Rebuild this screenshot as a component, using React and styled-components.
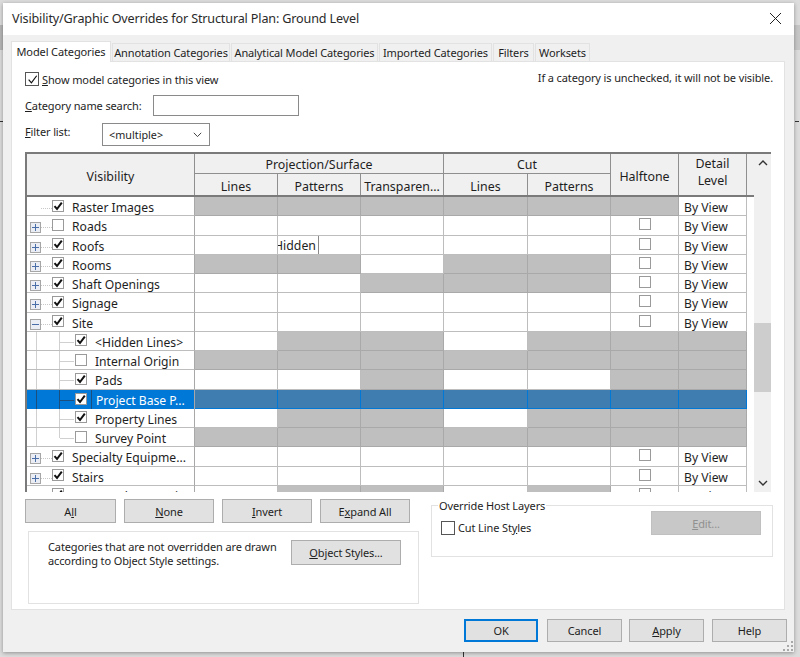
import React from "react";
import styled, { createGlobalStyle, css } from "styled-components";

const Global = createGlobalStyle`
  html, body { margin: 0; padding: 0; background: #dcdcdc; }
  * { box-sizing: border-box; }
`;

const FONT = `"Noto Sans", "Open Sans", sans-serif`;
const GREY = "#bfbfbf";
const SEL = "#3f7cb0";
const small = css`font-size: 11px; letter-spacing: -0.12px;`;

const Stage = styled.div`
  width: 800px; height: 657px; overflow: hidden;
  padding: 3px 6px 5px 3px;
  background-color: #dcdcdc;
  background-image:
    linear-gradient(#b6b6b6, #b6b6b6), linear-gradient(#c6c6c6, #c6c6c6),
    linear-gradient(#333, #333), linear-gradient(#333, #333), linear-gradient(#333, #333);
  background-repeat: no-repeat;
  background-size: 3px 25px, 6px 25px, 3px 1px, 4px 1px, 1px 5px;
  background-position: 0 25px, 794px 25px, 0 121px, 795px 121px, 463px 652px;
  font: 12.15px/16px ${FONT};
  color: #1e1e1e;
`;
const Dialog = styled.div`
  height: 100%;
  display: flex; flex-direction: column;
  background: #f0f0f0;
  box-shadow: 0 1px 4px rgba(0,0,0,.35);
`;
const TitleBar = styled.div`
  height: 32px; flex: none;
  background: #fff;
  display: flex; align-items: center; justify-content: space-between;
  padding: 0 12px 0 9px;
  font-size: 12.6px;
  letter-spacing: -0.15px;
  color: #2a2a2a;
`;
const CloseButton = styled.span`
  display: flex; width: 13px; height: 13px; margin-top: -1px;
`;
const Body = styled.div`
  flex: 1; min-height: 0;
  display: flex; flex-direction: column;
  padding: 7px 9px 0 8px;
`;
const TabStrip = styled.div`
  display: flex; align-items: flex-end; height: 20px; flex: none;
  position: relative; z-index: 1; margin-bottom: -1px;
`;
const Tab = styled.div`
  height: ${p => (p.$active ? "21px" : "19px")};
  width: ${p => p.$w}px;
  flex: none;
  margin-right: 1px;
  padding-top: ${p => (p.$active ? "0" : "1px")};
  display: flex; align-items: center; justify-content: center;
  background: ${p => (p.$active ? "#fff" : "#f0f0f0")};
  border: 1px solid #e2e2e2;
  border-bottom: ${p => (p.$active ? "0" : "1px solid #e2e2e2")};
  ${small}
  white-space: nowrap;
`;
const Panel = styled.div`
  width: 774px; height: 549px; flex: none;
  background: #fff;
  border: 1px solid #e2e2e2;
  padding: 10px 11px 0 13px;
  display: flex; flex-direction: column;
`;
const TopRow = styled.div`
  display: flex; justify-content: space-between; height: 14px; align-items: center;
`;
const CheckLabel = styled.label`
  display: flex; align-items: center; gap: 3px;
  margin-top: ${p => p.$mt || 0}px;
`;
const LabelText = styled.span`
  ${small}
  margin-top: 1px;
`;
const BigBox = styled.span`
  width: 14px; height: 14px; flex: none;
  background: #fff; border: 1px solid #555;
  display: flex; align-items: center; justify-content: center;
`;
const Hint = styled.span`
  ${small} margin-top: -2px;
`;
const FormRow = styled.div`
  display: flex; align-items: center; height: ${p => p.$h}px; margin-top: ${p => p.$mt}px;
`;
const FormLabel = styled.span`
  width: ${p => p.$w}px; flex: none;
  ${small}
  margin-top: ${p => p.$up || 0}px;
`;
const TextInput = styled.div`
  width: 146px; height: 21px;
  background: #fff; border: 1px solid #8a8a8a;
`;
const Select = styled.div`
  width: 108px; height: 23px;
  border: 1px solid #8a8a8a; background: #fff;
  display: flex; align-items: center; justify-content: space-between;
  padding: 0 7px 0 6px;
  font-size: 10.8px;
`;
const GridWrap = styled.div`
  margin-top: 6px; width: 746px; height: 340px; flex: none;
  display: flex; overflow: hidden;
  border-top: 2px solid #7a7a7a;
`;
const GridMain = styled.div`
  width: 729px; flex: none; overflow: hidden;
  background: #fff;
  border-left: 2px solid #7a7a7a;
`;
const Columns = "168px 83px 83px 83px 84px 83px 68px 68px";
const Head = styled.div`
  display: grid;
  grid-template-columns: ${Columns};
  grid-template-rows: 20px 21px;
  height: 43px;
  width: 727px;
  background: #f0f0f0;
  border-bottom: 2px solid #7a7a7a;
`;
const HeadCell = styled.div`
  grid-column: ${p => p.$col};
  grid-row: ${p => p.$row};
  display: flex; align-items: center; justify-content: center; text-align: center;
  border-right: 1px solid #8f8f8f;
  border-bottom: ${p => (p.$line ? "1px solid #8f8f8f" : "0")};
  padding: ${p => p.$pad || "0"};
  font-size: 12.4px; line-height: 17px;
`;
const Row = styled.div`
  display: grid;
  grid-template-columns: ${Columns};
  height: 19.25px;
`;
const TreeCell = styled.div`
  display: flex; align-items: center; min-width: 0;
  background: ${p => (p.$sel ? "#0078d7" : "#fff")};
  border-right: 1px solid #a8a8a8;
  border-bottom: ${p => (p.$sel ? "0" : "1px solid #bdbdbd")};
  overflow: hidden;
`;
const Gutter = styled.div`
  height: 100%; width: ${p => p.$w}px; flex: none;
  display: flex; align-items: center;
  background-repeat: no-repeat;
`;
const TopGutter = styled(Gutter)`
  padding: 5px 0 0 3px;
  background-image: repeating-linear-gradient(90deg, #c8c8c8 0 1px, transparent 1px 2px);
  background-size: 11px 1px;
  background-position: 14px 11px;
`;
const ChildGutter = styled(Gutter)`
  background-image:
    linear-gradient(${p => (p.$sel ? "#1c4f7d, #1c4f7d" : "#d0d0d0, #d0d0d0")}),
    linear-gradient(${p => (p.$sel ? "#1c4f7d, #1c4f7d" : "#d0d0d0, #d0d0d0")}),
    linear-gradient(${p => (p.$sel ? "#1c4f7d, #1c4f7d" : "#d0d0d0, #d0d0d0")});
  background-size: 1px 100%, 1px ${p => (p.$last ? "10px" : "100%")}, 14px 1px;
  background-position: 9px 0, 32px 0, 33px 10px;
`;
const ExpanderIcon = styled.svg`
  flex: none;
`;
const Box = styled.span`
  width: 12px; height: 12px; flex: none;
  margin-top: -1px;
  background: #fff; border: 1px solid #9a9a9a;
  display: flex; align-items: center; justify-content: center;
`;
const Name = styled.span`
  margin-left: ${p => (p.$sel ? "4px" : "8px")};
  padding: 4px 0 0 ${p => (p.$sel ? "4px" : "0")};
  white-space: nowrap;
  flex: ${p => (p.$sel ? "1" : "none")};
  height: 100%;
  display: flex; align-items: center;
  color: ${p => (p.$sel ? "#fff" : "#1e1e1e")};
  border-left: ${p => (p.$sel ? "1px solid #1c4f7d" : "0")};
`;
const DataCell = styled.div`
  min-width: 0;
  display: flex; align-items: center;
  justify-content: ${p => (p.$center ? "center" : "flex-start")};
  padding: ${p => (p.$text ? "4px 0 0 5px" : "0")};
  background: ${p => (p.$sel ? SEL : p.$grey ? GREY : "#fff")};
  border-right: 1px solid ${p => (p.$sel ? "#0078d7" : p.$grey ? "#a9a9a9" : "#bdbdbd")};
  border-bottom: 1px solid ${p => (p.$sel ? "#0078d7" : p.$grey ? "#a9a9a9" : "#bdbdbd")};
  white-space: nowrap; overflow: hidden;
`;
const EditorText = styled.span`
  display: flex; align-items: center; height: 100%;
  width: 45px; flex: none;
  margin-left: -4px;
  padding-top: 3px;
  font-size: 12.3px;
  border-right: 1px solid #888;
`;
const HalfBox = styled.span`
  width: 12px; height: 12px; margin-top: -2px;
  background: #fff; border: 1px solid #9a9a9a;
`;
const Scrollbar = styled.div`
  width: 17px; flex: none;
  display: flex; flex-direction: column; align-items: center;
  background: #f0f0f0;
`;
const ArrowBox = styled.div`
  height: 18px; flex: none; width: 100%;
  display: flex; align-items: center; justify-content: center;
`;
const Track = styled.div`
  flex: 1; width: 100%;
  padding-top: ${p => p.$top}px;
`;
const Thumb = styled.div`
  height: 69px; background: #cdcdcd;
`;
const LowerRow = styled.div`
  display: flex; margin-top: 7px; align-items: flex-start;
`;
const LeftColumn = styled.div`
  width: 394px; flex: none;
  display: flex; flex-direction: column;
`;
const ButtonRow = styled.div`
  display: flex; gap: 8px;
`;
const Btn = styled.div`
  width: ${p => p.$w}px; height: ${p => p.$h || 24}px; flex: none;
  display: flex; align-items: center; justify-content: center;
  padding-top: 1px;
  background: ${p => (p.$disabled ? "#c8c8c8" : "#e1e1e1")};
  color: ${p => (p.$disabled ? "#909090" : "#1e1e1e")};
  border: ${p => (p.$primary ? "1px solid #0078d7" : p.$disabled ? "1px solid #c0c0c0" : "1px solid #adadad")};
  box-shadow: ${p => (p.$primary ? "inset 0 0 0 1px #0078d7" : "none")};
  ${small}
  margin-right: ${p => p.$mr || 0}px;
`;
const U = styled.span`text-decoration: underline; text-underline-offset: 1px;`;
const NoteBox = styled.div`
  width: 391px; height: 73px; margin: 8px 0 0 3px; flex: none;
  border: 1px solid #e2e2e2;
  padding: 8px 17px 0 19px;
  display: flex; justify-content: space-between; align-items: flex-start;
`;
const NoteText = styled.div`
  ${small}
  line-height: 14px; white-space: nowrap;
`;
const Group = styled.fieldset`
  width: 343px; height: 59px; margin: -1px 0 0 12px; padding: 0 11px 0 9px;
  border: 1px solid #e2e2e2;
  display: flex; justify-content: space-between; align-items: flex-start;
  min-inline-size: 0;
`;
const GroupLegend = styled.legend`
  padding: 1px 1px 0; margin-left: -3px; line-height: 14px;
  ${small}
`;
const EditSlot = styled.div`
  margin-top: -2px;
`;
const Footer = styled.div`
  flex: 1; display: flex; justify-content: flex-end; align-items: flex-start;
  padding: 9px 0 0 0; margin-right: -2px; position: relative;
`;
const Grip = styled.svg`
  position: absolute; right: -6px; bottom: 1px;
`;

const Check = ({ size = 10, w = 2, color = "#111" }) => (
  <svg width={size} height={size} viewBox="0 0 10 10">
    <path d="M1.5 5.2 L4 8 L8.8 1.6" fill="none" stroke={color} strokeWidth={w} />
  </svg>
);

const Expander = ({ open }) => (
  <ExpanderIcon width="11" height="11" viewBox="0 0 11 11">
    <rect x=".5" y=".5" width="10" height="10" fill="#eaeef4" stroke="#a6a6a6" />
    <path d={open ? "M2 5.5H9" : "M2 5.5H9M5.5 2V9"} stroke="#4a6fa8" strokeWidth="1" />
  </ExpanderIcon>
);

const COLS = 7;
const rows = [
  { n: "Raster Images", leaf: true, c: true, g: "111111" },
  { n: "Roads", c: false, g: "000000", half: true },
  { n: "Roofs", c: true, g: "000000", half: true, edit: true },
  { n: "Rooms", c: true, g: "110110", half: true },
  { n: "Shaft Openings", c: true, g: "001110", half: true },
  { n: "Signage", c: true, g: "000000", half: true },
  { n: "Site", c: true, g: "000000", half: true, open: true },
  { n: "<Hidden Lines>", child: true, c: true, g: "0110111" },
  { n: "Internal Origin", child: true, c: false, g: "1111111" },
  { n: "Pads", child: true, c: true, g: "0010011" },
  { n: "Project Base P...", child: true, c: true, g: "1111111", sel: true },
  { n: "Property Lines", child: true, c: true, g: "0110111" },
  { n: "Survey Point", child: true, c: false, g: "1111111", last: true },
  { n: "Specialty Equipme...", c: true, g: "000000", half: true },
  { n: "Stairs", c: true, g: "000000", half: true },
  { n: "Structural Area Rein...", c: true, g: "011010", half: true },
];

function GridRow({ r }) {
  const flags = r.g.padEnd(COLS, "0");
  return (
    <Row>
      <TreeCell $sel={r.sel}>
        {r.child ? (
          <ChildGutter $w={48} $sel={r.sel} $last={r.last} />
        ) : (
          <TopGutter $w={25}>{r.leaf ? null : <Expander open={r.open} />}</TopGutter>
        )}
        <Box>{r.c && <Check />}</Box>
        <Name $sel={r.sel}>{r.n}</Name>
      </TreeCell>
      {[0, 1, 2, 3, 4].map(i => (
        <DataCell key={i} $grey={flags[i] === "1"} $sel={r.sel}>
          {r.edit && i === 1 && <EditorText>Hidden</EditorText>}
        </DataCell>
      ))}
      <DataCell $grey={flags[5] === "1"} $sel={r.sel} $center>
        {r.half && <HalfBox />}
      </DataCell>
      <DataCell $grey={flags[6] === "1"} $sel={r.sel} $text>
        {flags[6] === "1" ? null : "By View"}
      </DataCell>
    </Row>
  );
}

export default function App() {
  return (
    <Stage>
      <Global />
      <Dialog>
        <TitleBar>
          <span>Visibility/Graphic Overrides for Structural Plan: Ground Level</span>
          <CloseButton>
            <svg width="13" height="13" viewBox="0 0 13 13">
              <path d="M1 1L12 12M12 1L1 12" stroke="#222" strokeWidth="1" />
            </svg>
          </CloseButton>
        </TitleBar>
        <Body>
          <TabStrip>
            <Tab $active $w={100}>Model Categories</Tab>
            <Tab $w={118}>Annotation Categories</Tab>
            <Tab $w={147}>Analytical Model Categories</Tab>
            <Tab $w={113}>Imported Categories</Tab>
            <Tab $w={41}>Filters</Tab>
            <Tab $w={55}>Worksets</Tab>
          </TabStrip>
          <Panel>
            <TopRow>
              <CheckLabel>
                <BigBox><Check size={11} w={1.1} /></BigBox>
                <LabelText><U>S</U>how model categories in this view</LabelText>
              </CheckLabel>
              <Hint>If a category is unchecked, it will not be visible.</Hint>
            </TopRow>
            <FormRow $h={21} $mt={9}>
              <FormLabel $w={128}><U>C</U>ategory name search:</FormLabel>
              <TextInput />
            </FormRow>
            <FormRow $h={23} $mt={7}>
              <FormLabel $w={77} $up={-5}><U>F</U>ilter list:</FormLabel>
              <Select>
                <span>&lt;multiple&gt;</span>
                <svg width="9" height="6" viewBox="0 0 9 6">
                  <path d="M.8 .8L4.5 4.6L8.2 .8" fill="none" stroke="#444" strokeWidth="1" />
                </svg>
              </Select>
            </FormRow>
            <GridWrap>
              <GridMain>
                <Head>
                  <HeadCell $col="1" $row="1 / span 2" $pad="3px 0 0">Visibility</HeadCell>
                  <HeadCell $col="2 / span 3" $row="1" $line $pad="1px 0 0">Projection/Surface</HeadCell>
                  <HeadCell $col="5 / span 2" $row="1" $line $pad="1px 0 0">Cut</HeadCell>
                  <HeadCell $col="7" $row="1 / span 2" $pad="3px 0 0">Halftone</HeadCell>
                  <HeadCell $col="8" $row="1 / span 2" $pad="0 0 5px">Detail<br />Level</HeadCell>
                  <HeadCell $col="2" $row="2" $pad="3px 0 0">Lines</HeadCell>
                  <HeadCell $col="3" $row="2" $pad="3px 0 0">Patterns</HeadCell>
                  <HeadCell $col="4" $row="2" $pad="3px 0 0">Transparen...</HeadCell>
                  <HeadCell $col="5" $row="2" $pad="3px 0 0">Lines</HeadCell>
                  <HeadCell $col="6" $row="2" $pad="3px 0 0">Patterns</HeadCell>
                </Head>
                {rows.map(r => <GridRow key={r.n} r={r} />)}
              </GridMain>
              <Scrollbar>
                <ArrowBox>
                  <svg width="10" height="6" viewBox="0 0 10 6">
                    <path d="M1 5L5 1L9 5" fill="none" stroke="#333" strokeWidth="1.4" />
                  </svg>
                </ArrowBox>
                <Track $top={151}><Thumb /></Track>
                <ArrowBox>
                  <svg width="10" height="6" viewBox="0 0 10 6">
                    <path d="M1 1L5 5L9 1" fill="none" stroke="#333" strokeWidth="1.4" />
                  </svg>
                </ArrowBox>
              </Scrollbar>
            </GridWrap>
            <LowerRow>
              <LeftColumn>
                <ButtonRow>
                  <Btn $w={91}>A<U>l</U>l</Btn>
                  <Btn $w={90}><U>N</U>one</Btn>
                  <Btn $w={90}><U>I</U>nvert</Btn>
                  <Btn $w={90}>E<U>x</U>pand All</Btn>
                </ButtonRow>
                <NoteBox>
                  <NoteText>
                    Categories that are not overridden are drawn<br />
                    according to Object Style settings.
                  </NoteText>
                  <Btn $w={110} $h={25}><U>O</U>bject Styles...</Btn>
                </NoteBox>
              </LeftColumn>
              <Group>
                <GroupLegend>Override Host Layers</GroupLegend>
                <CheckLabel $mt={6}>
                  <BigBox />
                  <LabelText>Cut Line St<U>y</U>les</LabelText>
                </CheckLabel>
                <EditSlot>
                  <Btn $w={110} $h={24} $disabled><U>E</U>dit...</Btn>
                </EditSlot>
              </Group>
            </LowerRow>
          </Panel>
          <Footer>
            <Btn $w={74} $h={23} $primary $mr={9}>OK</Btn>
            <Btn $w={75} $h={23} $mr={7}>Cancel</Btn>
            <Btn $w={75} $h={23} $mr={8}><U>A</U>pply</Btn>
            <Btn $w={75} $h={23}>Help</Btn>
            <Grip width="10" height="10" viewBox="0 0 10 10">
              <g fill="#a8a8a8">
                <rect x="8" y="0" width="2" height="2" />
                <rect x="4" y="4" width="2" height="2" />
                <rect x="8" y="4" width="2" height="2" />
                <rect x="0" y="8" width="2" height="2" />
                <rect x="4" y="8" width="2" height="2" />
                <rect x="8" y="8" width="2" height="2" />
              </g>
            </Grip>
          </Footer>
        </Body>
      </Dialog>
    </Stage>
  );
}
